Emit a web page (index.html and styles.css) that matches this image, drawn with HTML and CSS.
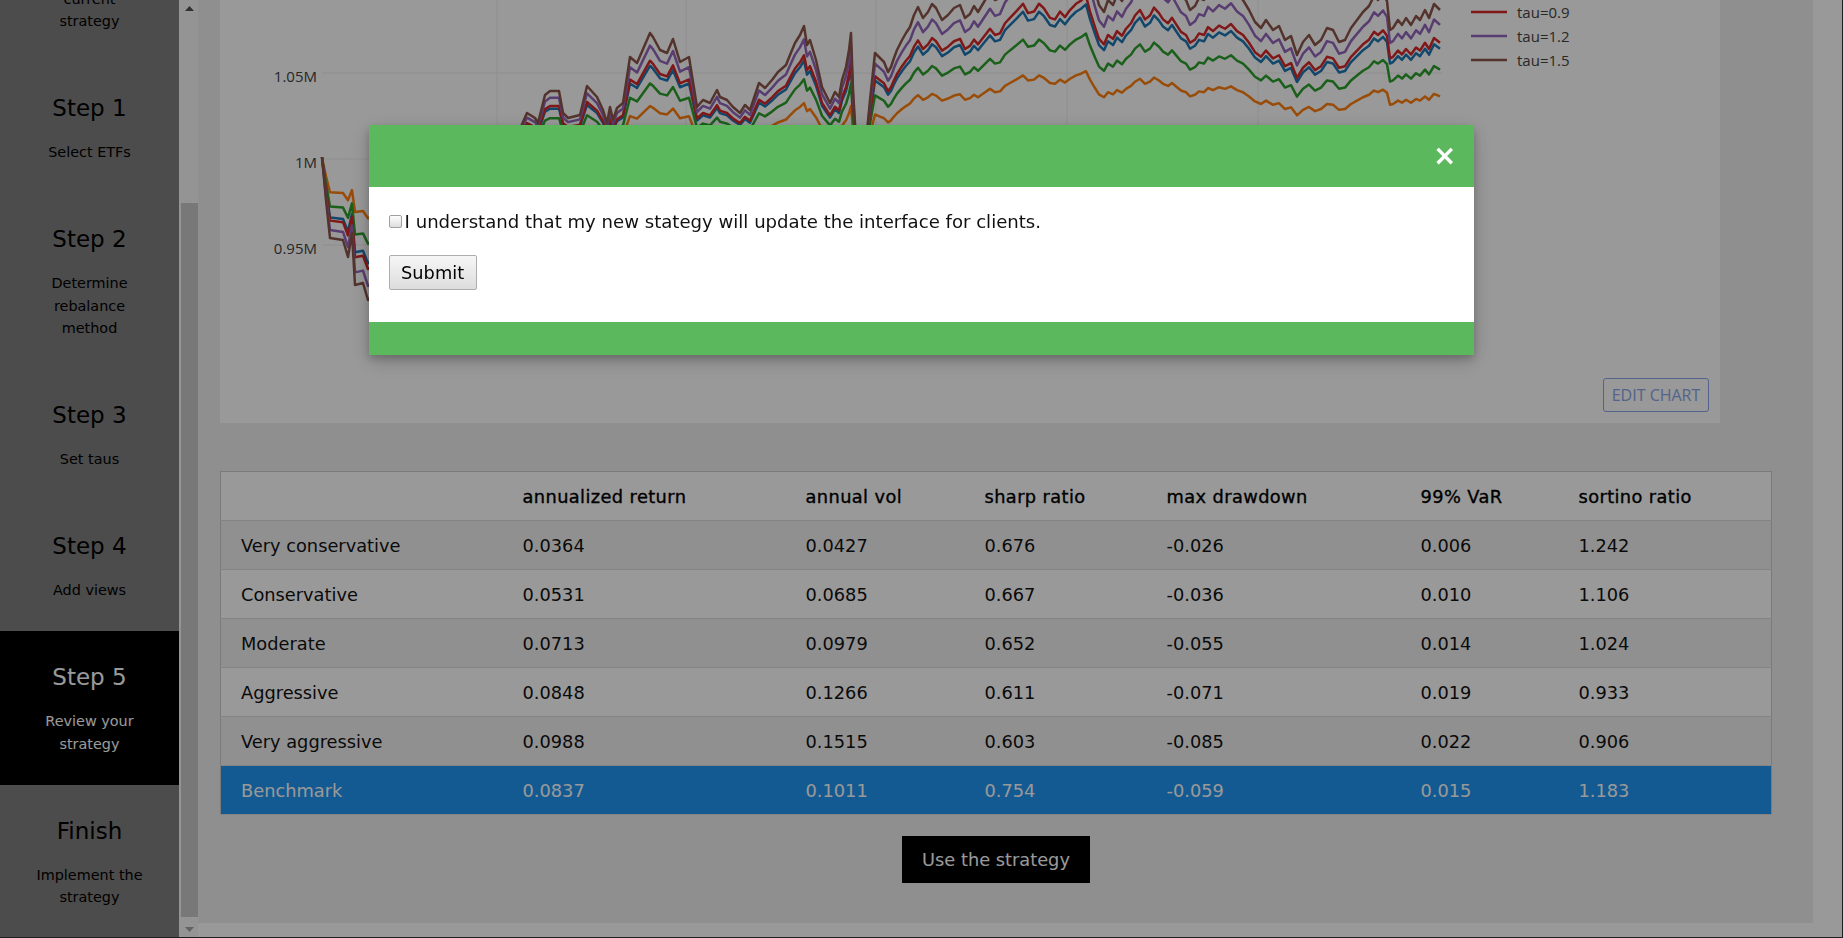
FILE: index.html
```html
<!DOCTYPE html>
<html lang="en">
<head>
<meta charset="utf-8">
<title>Review your strategy</title>
<link rel="stylesheet" href="styles.css">
</head>
<body>
<div class="app">
  <nav class="sidebar">
    <div class="step"><h3>Start</h3><p class="narrow">Modify your current strategy</p></div>
    <div class="step"><h3>Step 1</h3><p>Select ETFs</p></div>
    <div class="step"><h3>Step 2</h3><p>Determine rebalance method</p></div>
    <div class="step"><h3>Step 3</h3><p>Set taus</p></div>
    <div class="step"><h3>Step 4</h3><p>Add views</p></div>
    <div class="step active"><h3>Step 5</h3><p>Review your strategy</p></div>
    <div class="step"><h3>Finish</h3><p>Implement the strategy</p></div>
  </nav>
  <div class="scrollbar">
    <span class="sb-btn"><svg width="9" height="5" viewBox="0 0 9 5"><polygon points="0,5 4.5,0 9,5" class="sb-arrow"/></svg></span>
    <span class="sb-track"><span class="sb-thumb"></span></span>
    <span class="sb-btn"><svg width="9" height="5" viewBox="0 0 9 5"><polygon points="0,0 4.5,5 9,0" class="sb-arrow off"/></svg></span>
  </div>
  <main class="main">
    <div class="panel">
      <div class="chart-card">
        <svg class="chart" width="1500" height="423" viewBox="0 0 1500 423">
          <defs>
            <polyline id="base" class="trace" vector-effect="non-scaling-stroke" points="322,157 326,200 330,238 343,240 348,257 352,233 355,285 363,283 368,300 380,290 392,270 404,262 418,250 430,238 442,228 455,214 468,200 480,188 492,176 504,160 515,140 527,113 535,118 538,123 545,95 550,91 559,91 563,113 568,118 580,115 587,86 597,97 603,110 607,123 610,107 613,120 617,108 623,103 630,57 637,63 650,33 653,37 660,50 667,53 673,39 680,62 689,57 697,107 703,100 710,103 717,90 720,97 727,100 733,107 740,113 745,105 750,110 755,95 759,83 765,88 772,80 778,72 786,65 790,55 795,43 800,35 804,26 807,45 810,40 816,60 822,87 826,95 830,103 835,92 839,97 842,80 846,67 849,50 851,33 853,90 856,140 861,130 866,142 870,100 875,53 880,58 884,62 888,72 891,67 894,58 897,50 902,40 906,33 910,27 914,15 918,7 923,18 928,12 932,4 936,8 942,20 948,15 954,8 960,5 965,18 970,14 974,6 978,12 984,2 990,-8 995,0 1000,-2 1005,-15 1010,-22 1016,-30 1023,-40 1028,-28 1034,-30 1039,-40 1044,-34 1050,-22 1055,-20 1060,-30 1065,-23 1070,-32 1076,-40 1081,-44 1086,-50 1090,-30 1095,-10 1099,5 1104,12 1108,0 1113,5 1117,-5 1122,1 1126,-8 1131,-15 1135,-25 1140,-32 1145,-20 1150,-25 1154,-35 1159,-28 1163,-20 1168,-15 1172,-22 1177,-12 1181,-4 1186,0 1190,10 1195,6 1199,-2 1204,0 1208,-10 1213,-5 1219,-12 1225,-8 1231,-14 1237,-5 1243,0 1249,10 1255,22 1261,28 1266,20 1273,30 1279,26 1285,40 1291,36 1297,55 1303,42 1309,35 1315,45 1321,40 1327,28 1333,30 1339,42 1345,40 1351,28 1357,20 1363,12 1369,6 1374,-4 1378,0 1383,-6 1387,1 1390,30 1393,28 1398,20 1402,25 1406,18 1411,25 1416,16 1420,20 1425,10 1429,18 1434,4 1440,10"/>
          </defs>
          <g transform="translate(-220 0)">
            <g class="grid">
              <line x1="497" y1="0" x2="497" y2="320"/>
              <line x1="686" y1="0" x2="686" y2="320"/>
              <line x1="876" y1="0" x2="876" y2="320"/>
              <line x1="1067" y1="0" x2="1067" y2="320"/>
              <line x1="1258" y1="0" x2="1258" y2="320"/>
              <line x1="322" y1="73" x2="1442" y2="73"/>
              <line x1="322" y1="159" x2="1442" y2="159"/>
              <line x1="322" y1="245" x2="1442" y2="245"/>
            </g>
            <g class="ticks">
              <text x="317" y="76">1.05M</text>
              <text x="317" y="162">1M</text>
              <text x="317" y="248">0.95M</text>
            </g>
            <use href="#base" class="t-blue" transform="matrix(1 0 0 0.74 0 41.34)"/>
            <use href="#base" class="t-orange" transform="matrix(1 0 0 0.42 0 92.22)"/>
            <use href="#base" class="t-green" transform="matrix(1 0 0 0.6 0 63.6)"/>
            <use href="#base" class="t-red" transform="matrix(1 0 0 0.78 0 34.98)"/>
            <use href="#base" class="t-purple" transform="matrix(1 0 0 0.9 0 15.9)"/>
            <use href="#base" class="t-brown"/>
            <g class="legend">
              <line x1="1471" y1="12" x2="1507" y2="12" class="t-red"/>
              <text x="1517" y="12">tau=0.9</text>
              <line x1="1471" y1="36" x2="1507" y2="36" class="t-purple"/>
              <text x="1517" y="36">tau=1.2</text>
              <line x1="1471" y1="60" x2="1507" y2="60" class="t-brown"/>
              <text x="1517" y="60">tau=1.5</text>
            </g>
          </g>
        </svg>
        <a class="edit-chart">EDIT CHART</a>
      </div>

      <table class="stats">
        <colgroup>
          <col class="c1"><col class="c2"><col class="c3"><col class="c4"><col class="c5"><col class="c6"><col class="c7">
        </colgroup>
        <thead>
          <tr><th></th><th>annualized return</th><th>annual vol</th><th>sharp ratio</th><th>max drawdown</th><th>99% VaR</th><th>sortino ratio</th></tr>
        </thead>
        <tbody>
          <tr><td>Very conservative</td><td>0.0364</td><td>0.0427</td><td>0.676</td><td>-0.026</td><td>0.006</td><td>1.242</td></tr>
          <tr><td>Conservative</td><td>0.0531</td><td>0.0685</td><td>0.667</td><td>-0.036</td><td>0.010</td><td>1.106</td></tr>
          <tr><td>Moderate</td><td>0.0713</td><td>0.0979</td><td>0.652</td><td>-0.055</td><td>0.014</td><td>1.024</td></tr>
          <tr><td>Aggressive</td><td>0.0848</td><td>0.1266</td><td>0.611</td><td>-0.071</td><td>0.019</td><td>0.933</td></tr>
          <tr><td>Very aggressive</td><td>0.0988</td><td>0.1515</td><td>0.603</td><td>-0.085</td><td>0.022</td><td>0.906</td></tr>
          <tr class="benchmark"><td>Benchmark</td><td>0.0837</td><td>0.1011</td><td>0.754</td><td>-0.059</td><td>0.015</td><td>1.183</td></tr>
        </tbody>
      </table>

      <div class="actions"><button class="use-btn" type="button">Use the strategy</button></div>
    </div>
  </main>
</div>

<div class="modal">
  <div class="modal-content">
    <div class="modal-header"><span class="close">&times;</span></div>
    <div class="modal-body">
      <label class="confirm"><input type="checkbox" class="check">I understand that my new stategy will update the interface for clients.</label>
      <button class="submit" type="button">Submit</button>
    </div>
    <div class="modal-footer"></div>
  </div>
</div>
</body>
</html>
```

FILE: styles.css
```css
html, body {
  margin: 0;
  padding: 0;
}

body {
  font-family: "DejaVu Sans", "Liberation Sans", sans-serif;
  background: #ffffff;
  overflow: hidden;
}

.app {
  display: flex;
  height: 100vh;
}

/* ---------- sidebar ---------- */
.sidebar {
  width: 179px;
  flex: none;
  background: #7f7f7f;
  display: flex;
  flex-direction: column;
  justify-content: flex-end;
  overflow: hidden;
}

.step {
  flex: none;
  padding: 18px 10px 29.5px;
  text-align: center;
  color: #000;
}

.step h3 {
  margin: 10px 0 0;
  font-size: 23px;
  line-height: 36px;
  font-weight: normal;
}

.step p {
  margin: 15px auto 0;
  max-width: 118px;
  font-size: 14.4px;
  line-height: 22.5px;
}

.step p.narrow {
  max-width: 96px;
}

.step.active {
  background: #000;
  color: #fff;
}

/* ---------- sidebar scrollbar ---------- */
.scrollbar {
  width: 19px;
  flex: none;
  background: #f7f7f7;
  display: flex;
  flex-direction: column;
}

.sb-btn {
  height: 17px;
  flex: none;
  display: flex;
  align-items: center;
  justify-content: center;
  padding-left: 2px;
}

.sb-btn svg {
  display: block;
}

.sb-arrow {
  fill: #505050;
}

.sb-arrow.off {
  fill: #a3a3a3;
}

.sb-track {
  flex: 1;
  display: flex;
  flex-direction: column;
  justify-content: flex-end;
  padding: 0 0 4px 2px;
}

.sb-thumb {
  height: 714px;
  background: #c9c9c9;
}

/* ---------- main ---------- */
.main {
  flex: 1;
  min-width: 0;
  padding: 0 30px 15px 0;
}

.panel {
  background: #eeeeee;
  padding: 0 41px 40px 22px;
}

.chart-card {
  position: relative;
  width: 1500px;
  height: 423px;
  background: #fff;
  margin-bottom: 48px;
  overflow: hidden;
}

.chart {
  display: block;
}

.grid line {
  stroke: #eeeeee;
  stroke-width: 1;
}

.ticks text {
  font-family: "Open Sans", "DejaVu Sans", sans-serif;
  font-size: 15px;
  fill: #444;
  text-anchor: end;
  dominant-baseline: central;
}

.trace {
  fill: none;
  stroke-width: 2.5;
  stroke-linejoin: round;
}

.legend line {
  stroke-width: 2.5;
}

.legend text {
  font-family: "Open Sans", "DejaVu Sans", sans-serif;
  font-size: 15px;
  fill: #444;
  dominant-baseline: central;
}

.t-blue { stroke: #1f77b4; }
.t-orange { stroke: #ff7f0e; }
.t-green { stroke: #2ca02c; }
.t-red { stroke: #d62728; }
.t-purple { stroke: #9467bd; }
.t-brown { stroke: #8c564b; }

.edit-chart {
  position: absolute;
  right: 11px;
  bottom: 11px;
  width: 106px;
  height: 34px;
  box-sizing: border-box;
  border: 1px solid #8aa6e8;
  border-radius: 3px;
  color: #8aa6e8;
  font-family: "Open Sans", "DejaVu Sans", sans-serif;
  font-size: 16px;
  display: flex;
  align-items: center;
  justify-content: center;
}

/* ---------- stats table ---------- */
.stats {
  width: 100%;
  border-collapse: collapse;
  table-layout: fixed;
  border: 1px solid #ccc;
  font-size: 17.8px;
  color: #111;
}

.c1 { width: 282px; }
.c2 { width: 283px; }
.c3 { width: 179px; }
.c4 { width: 182px; }
.c5 { width: 254px; }
.c6 { width: 158px; }

.stats th,
.stats td {
  text-align: left;
  padding: 11px 20px 10px;
  line-height: 27px;
  white-space: nowrap;
}

.stats th {
  font-weight: normal;
  color: #000;
  -webkit-text-stroke: 0.35px #000;
  letter-spacing: 0.4px;
}

.stats tr {
  border-bottom: 1px solid #ddd;
  background: #fff;
}

.stats tbody tr:nth-child(odd) {
  background: #f1f1f1;
}

.stats tbody tr.benchmark {
  background: #2196f3;
  color: #fff;
}

.actions {
  display: flex;
  justify-content: center;
  margin-top: 21px;
}

.use-btn {
  background: #000;
  color: #fff;
  border: none;
  font-family: inherit;
  font-size: 17.8px;
  line-height: 27px;
  padding: 10px 20px;
}

/* ---------- modal ---------- */
.modal {
  position: fixed;
  inset: 0;
  background: rgba(0, 0, 0, 0.4);
  padding-top: 125px;
  box-shadow: inset -1px -1px 0 #1e1e1e;
}

.modal-content {
  width: 60%;
  margin: 0 auto;
  background: #fff;
  box-shadow: 0 4px 8px 0 rgba(0, 0, 0, 0.2), 0 6px 20px 0 rgba(0, 0, 0, 0.19);
}

.modal-header {
  height: 62px;
  box-sizing: border-box;
  padding: 2px 18px 2px 16px;
  background: #5cb85c;
  display: flex;
  align-items: center;
  justify-content: flex-end;
}

.close {
  color: #fff;
  font-size: 28px;
  font-weight: bold;
  line-height: 1;
}

.modal-body {
  padding: 20px 16px 32px;
  color: #111;
}

.confirm {
  display: flex;
  align-items: center;
  height: 28px;
  font-size: 18.1px;
}

.check {
  appearance: none;
  -webkit-appearance: none;
  width: 13px;
  height: 13px;
  margin: 0 3px 0 4px;
  box-sizing: border-box;
  border: 1px solid #a0a0a0;
  border-radius: 2px;
  background: linear-gradient(#fdfdfd, #dedede);
}

.submit {
  display: block;
  margin: 20px 0 0 4px;
  width: 88px;
  height: 35px;
  box-sizing: border-box;
  border: 1px solid #adadad;
  border-radius: 2px;
  background: linear-gradient(#f6f6f6, #dddddd);
  font-family: inherit;
  font-size: 17.8px;
  color: #000;
  padding: 0;
}

.modal-footer {
  height: 33px;
  background: #5cb85c;
}
```
